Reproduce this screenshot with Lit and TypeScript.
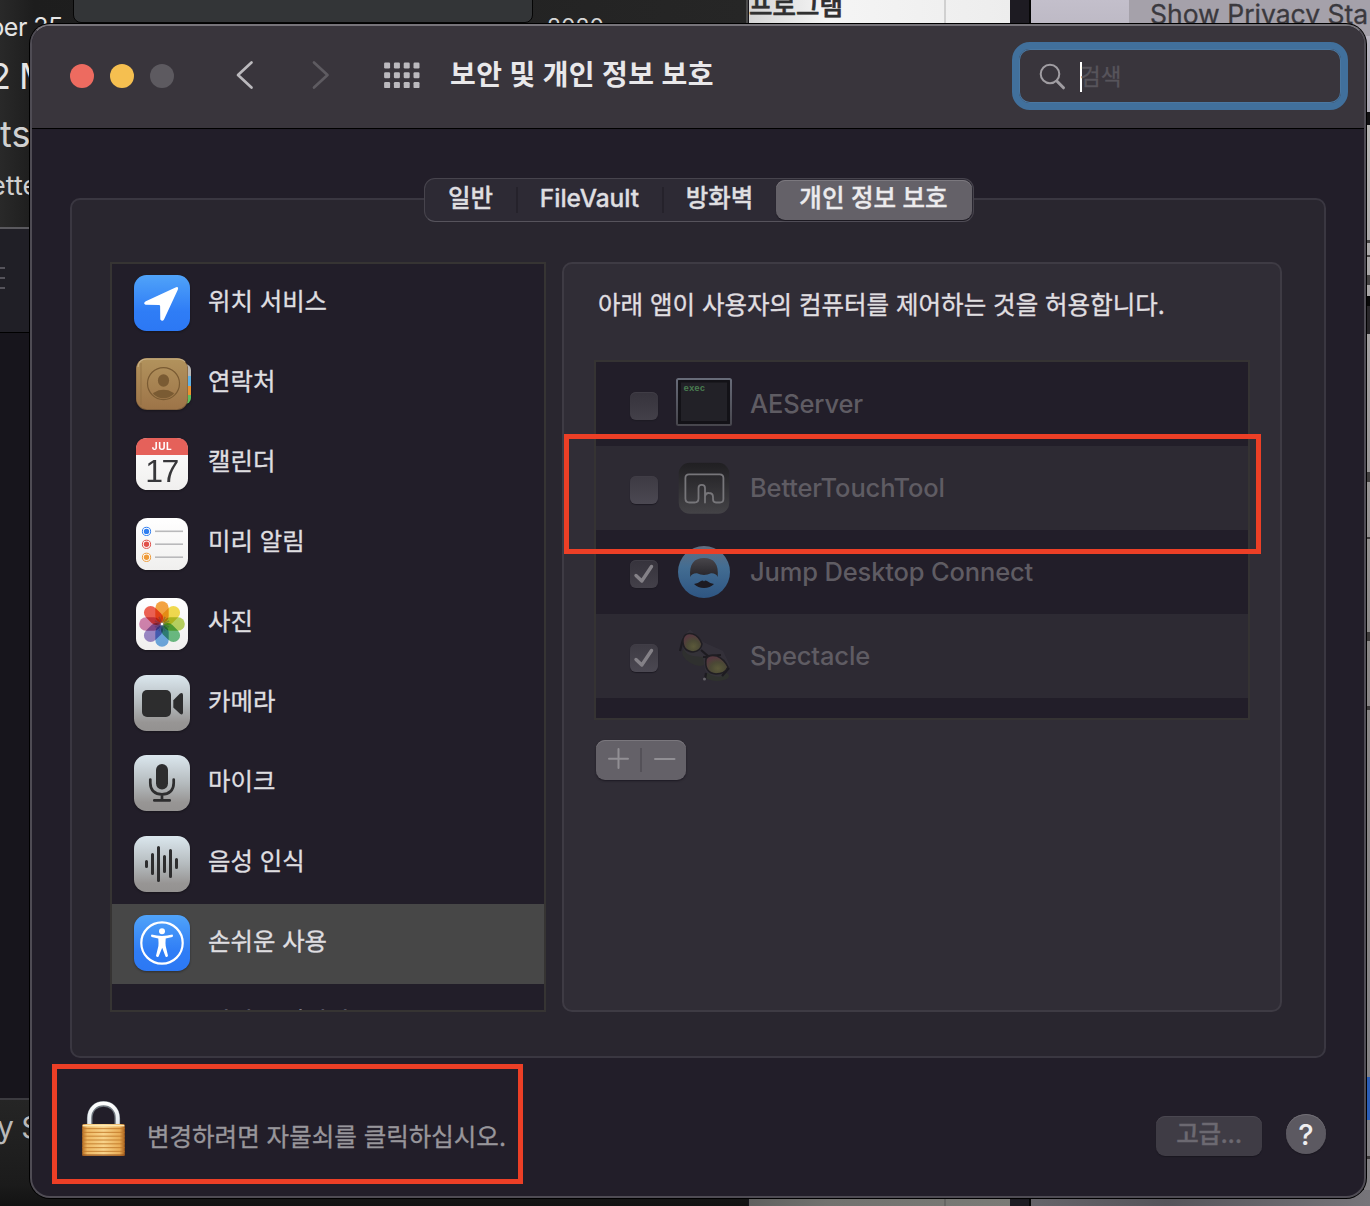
import { LitElement, html, svg, css, TemplateResult } from "lit";
import { customElement } from "lit/decorators.js";
import { classMap } from "lit/directives/class-map.js";

interface Category {
  label: string;
  icon: TemplateResult;
  selected?: boolean;
}

interface AppEntry {
  name: string;
  icon: TemplateResult;
  checked: boolean;
}

const blueTile = svg`
  <defs>
    <linearGradient id="blue" x1="0" y1="0" x2="0" y2="1">
      <stop offset="0" stop-color="#50a3f9"/><stop offset=".65" stop-color="#2f7df6"/><stop offset="1" stop-color="#2c78f4"/>
    </linearGradient>
  </defs>
  <rect width="56" height="56" rx="12.5" fill="url(#blue)"/>`;

const grayTile = svg`
  <defs>
    <linearGradient id="gray" x1="0" y1="0" x2="0" y2="1">
      <stop offset="0" stop-color="#dbe7ee"/><stop offset=".5" stop-color="#b5bbbe"/><stop offset=".85" stop-color="#979594"/><stop offset="1" stop-color="#949291"/>
    </linearGradient>
  </defs>
  <rect width="56" height="56" rx="12.5" fill="url(#gray)"/>`;

const whiteTile = svg`
  <defs>
    <linearGradient id="white" x1="0" y1="0" x2="0" y2="1">
      <stop offset="0" stop-color="#ffffff"/><stop offset="1" stop-color="#f0efee"/>
    </linearGradient>
  </defs>
  <rect x="2" y="3" width="52" height="52" rx="11.5" fill="url(#white)"/>`;

const locationIcon = html`<svg viewBox="0 0 56 56">${blueTile}
  <path d="M11.8 26.2 L41.5 12.4 Q45 11.2 43.8 14.8 L30 44.6 Q28.4 47 26.3 44.6 L26.1 31 Q26 30 25 29.9 L11.6 29.7 Q8.6 28.4 11.8 26.2Z" fill="#fff"/></svg>`;

const contactsIcon = html`<svg viewBox="0 0 56 56">
  <defs>
    <linearGradient id="tan" x1="0" y1="0" x2="0" y2="1">
      <stop offset="0" stop-color="#b2935d"/><stop offset="1" stop-color="#9d7448"/>
    </linearGradient>
    <clipPath id="disc"><circle cx="29.500" cy="28.600" r="14.600"/></clipPath>
    <clipPath id="tabs"><rect x="40" y="9" width="17" height="40" rx="6"/></clipPath>
  </defs>
  <g clip-path="url(#tabs)">
    <rect x="40" y="9" width="17" height="12" fill="#b9b7b4"/><rect x="40" y="21" width="17" height="10" fill="#61b2e4"/>
    <rect x="40" y="31" width="17" height="9" fill="#ea9230"/><rect x="40" y="40" width="17" height="9" fill="#5fbf5c"/>
  </g>
  <rect x="2" y="3" width="52" height="52" rx="11" fill="#7b5c3a"/>
  <rect x="2.400" y="3.200" width="51" height="51" rx="10.600" fill="url(#tan)"/>
  <path d="M4 12 Q4.500 4.200 13 4 H43 Q49 4 51 7" fill="none" stroke="#d3bf9a" stroke-width="1.200" opacity=".7"/>
  <path d="M7 8 V50" stroke="#8b6c40" stroke-width="1.200" opacity=".6"/>
  <g fill="#7a5b33">
    <ellipse cx="29.500" cy="25.500" rx="5.600" ry="6.200"/>
    <ellipse cx="29.500" cy="43" rx="12.500" ry="8.300" clip-path="url(#disc)"/>
  </g>
  <circle cx="29.500" cy="28.600" r="16" fill="none" stroke="#7a5b33" stroke-width="1.200"/></svg>`;

const calendarIcon = html`<svg viewBox="0 0 56 56">${whiteTile}
  <path d="M2 20 V14.500 Q2 3 13.500 3 H42.500 Q54 3 54 14.500 V20Z" fill="#e5615a"/>
  <text class="month" x="28" y="15.300" text-anchor="middle">JUL</text>
  <text class="day" x="27.500" y="47" text-anchor="middle">17</text></svg>`;

const reminderRows = [
  { y: 16.4, color: "#2f7ef0" },
  { y: 29.3, color: "#e0504a" },
  { y: 42.3, color: "#ee9a38" },
];
const remindersIcon = html`<svg viewBox="0 0 56 56">${whiteTile}
  ${reminderRows.map((r) => svg`
    <circle cx="12.500" cy=${r.y} r="4.100" fill="#fff" stroke=${r.color} stroke-width="1"/>
    <circle cx="12.500" cy=${r.y} r="2.700" fill=${r.color}/>
    <rect x="21" y=${r.y - 0.9} width="28" height="1.600" fill="#b9b9bb"/>`)}</svg>`;

const petals = ["#f49a2d", "#f2d93c", "#b3d150", "#5db978", "#5fa3e3", "#9480c6", "#cf78a8", "#ee5140"];
const photosIcon = html`<svg viewBox="0 0 56 56">${whiteTile}
  <g class="petals">
  ${petals.map((c, i) => svg`<rect x="21.300" y="6.200" width="13.400" height="21.500" rx="6.700" fill=${c} transform="rotate(${i * 45} 28 29)"/>`)}
  </g>
  <g fill="none" stroke="#3a3450" stroke-opacity=".38" stroke-width=".8">
    ${petals.map((_, i) => svg`<path d="M28 29 L24.600 22 M28 29 L31.400 22" transform="rotate(${i * 45} 28 29)"/>`)}
  </g>
  <circle cx="28" cy="29" r="1.200" fill="#fff"/></svg>`;

const cameraIcon = html`<svg viewBox="0 0 56 56">${grayTile}
  <rect x="8" y="15" width="29" height="27" rx="5" fill="#2d2d2e"/>
  <path d="M39.300 25.300 L46 18.500 Q48.800 16.800 49 19.800 V37.500 Q48.800 40.500 46 38.800 L39.300 32.500Z" fill="#2d2d2e"/></svg>`;

const micIcon = html`<svg viewBox="0 0 56 56">${grayTile}
  <rect x="22" y="9" width="12" height="25.500" rx="6" fill="#2d2d2e"/>
  <path d="M16.300 24.500 V28 C16.300 35.500 21 39.300 28 39.300 S39.700 35.500 39.700 28 V24.500 M28 39.500 V45 M20.300 45.400 H35.700" fill="none" stroke="#2d2d2e" stroke-width="2.700" stroke-linecap="round"/></svg>`;

const speechIcon = html`<svg class="low" viewBox="0 0 56 56">${grayTile}
  <path d="M12.500 25.500 V30.500 M18.500 18.500 V37.500 M24.500 11.500 V44.500 M30.500 20.500 V35.500 M36.500 14.500 V40.500 M42.500 23.500 V31.500" stroke="#2d2d2e" stroke-width="3" stroke-linecap="round"/></svg>`;

const accessIcon = html`<svg viewBox="0 0 56 56">${blueTile}
  <circle cx="28" cy="28" r="20.700" fill="none" stroke="#fff" stroke-width="2.200"/>
  <circle cx="28" cy="16.300" r="3" fill="#fff"/>
  <path d="M17.600 19.600 Q28 22.200 38.400 19.600 Q39.800 21 38.400 22 L31.700 23.400 Q31.300 28 31.700 31 L34 40.800 Q33 43 31.500 41.500 L28.200 32.800 L24.600 41.500 Q23 43 22 40.800 L24.400 31 Q24.700 28 24.300 23.400 L17.600 22 Q16.200 21 17.600 19.600Z" fill="#fff"/></svg>`;

const execIcon = html`<svg viewBox="0 0 56 56">
  <defs><linearGradient id="bezel" x1="0" y1="0" x2="0" y2="1"><stop offset="0" stop-color="#676b78"/><stop offset="1" stop-color="#47464d"/></linearGradient></defs>
  <rect x="1" y="5" width="54" height="46" rx="1.500" fill="#131217" stroke="url(#bezel)" stroke-width="2"/>
  <rect x="5" y="8.500" width="46" height="38.500" fill="#222127"/>
  <text class="exec" x="7.500" y="17">exec</text></svg>`;

const touchIcon = html`<svg viewBox="0 0 56 56">
  <defs><linearGradient id="btt" x1="0" y1="0" x2="0" y2="1"><stop offset="0" stop-color="#201f22"/><stop offset="1" stop-color="#444347"/></linearGradient></defs>
  <rect x="2.700" y="4.800" width="50.600" height="51" rx="11" fill="url(#btt)"/>
  <path d="M22.500 38.500 V30 Q22.500 26.800 25.800 26.800 Q29 26.800 29 30 V44.500 M29 38.500 Q29.500 34.800 32.800 35 Q37 35 37 39 V41 Q37 44.500 40 44.500 H44 Q47.400 44.500 47.400 41 V20 Q47.400 16.300 43.700 16.300 H13 Q9.400 16.300 9.400 20 V40.500 Q9.400 44.500 13.300 44.500 H18.500 Q22.500 44.500 22.500 40.500 V36" fill="none" stroke="#77767a" stroke-width="1.800" stroke-linecap="round"/></svg>`;

const jumpIcon = html`<svg viewBox="0 0 56 56">
  <defs><linearGradient id="jump" x1="0" y1="0" x2="0" y2="1"><stop offset="0" stop-color="#626e80"/><stop offset=".4" stop-color="#436d92"/><stop offset="1" stop-color="#2e5582"/></linearGradient>
  <linearGradient id="hair" x1="0" y1="0" x2="0" y2="1"><stop offset="0" stop-color="#48464b"/><stop offset="1" stop-color="#262429"/></linearGradient></defs>
  <circle cx="28" cy="30" r="26" fill="url(#jump)"/>
  <path d="M14.300 35 C13 22 18 16 28 16 S43 22 41.700 35 Q40 31 35 31.300 Q28 34.500 21 31.300 Q16 31 14.300 35Z" fill="url(#hair)"/>
  <path d="M18 42 Q22 41.500 25 39 Q27 38 28 39.500 Q29 38 31 39 Q34 41.500 38 42 Q34 46 28 46 Q22 46 18 42Z" fill="#1d1b22"/></svg>`;

const spectacleIcon = html`<svg viewBox="0 0 56 56">
  <defs><radialGradient id="lens" cx=".55" cy=".7" r=".6"><stop offset="0" stop-color="#5c5a3a"/><stop offset=".55" stop-color="#4b4935"/><stop offset="1" stop-color="#55393f"/></radialGradient></defs>
  <ellipse cx="18" cy="31" rx="13" ry="7" fill="#343b27" opacity=".35" transform="rotate(30 18 31)"/>
  <ellipse cx="41" cy="50" rx="12" ry="5" fill="#343b27" opacity=".45"/>
  <path d="M5 13 L14 3.500 L27 16 L47 25 L54 40 L48 50 Q36 53 29 44 L27 31 L17 30 Q6 28 5 13Z" fill="#37343d" opacity=".65"/>
  <path d="M4 25 L7 13 M25 24 L32 30 L45 29 M27 31 L31 31 M53 42 L46 50 M30 47 L29 54" stroke="#1d1b20" stroke-width="2.200" fill="none"/>
  <path d="M7 13 Q9 6 17 8 Q23 10 26 18 Q25 25 17 26 Q6 25 7 13Z" fill="url(#lens)" stroke="#201e23" stroke-width="1.600"/>
  <path d="M30 33 Q33 28 41 30 Q48 33 52 41 Q49 48 40 48 Q28 47 30 33Z" fill="url(#lens)" stroke="#201e23" stroke-width="1.600"/>
  <circle cx="28.500" cy="53" r="1.500" fill="#66646a"/></svg>`;

const lockIcon = html`<svg class="lock" viewBox="0 0 44 56">
  <defs>
    <linearGradient id="brass" x1="0" y1="0" x2="1" y2="0"><stop offset="0" stop-color="#b76e22"/><stop offset=".12" stop-color="#eeb964"/><stop offset=".5" stop-color="#f8d38a"/><stop offset=".88" stop-color="#e9ad56"/><stop offset="1" stop-color="#a85f1a"/></linearGradient>
    <linearGradient id="steel" x1="0" y1="0" x2="0" y2="1"><stop offset="0" stop-color="#ffffff"/><stop offset="1" stop-color="#dde4ea"/></linearGradient>
  </defs>
  <path d="M7.700 25 V17.500 C7.700 -2 35.300 -2 35.300 17.500 V25" fill="none" stroke="#717980" stroke-width="5.600"/>
  <path d="M7.300 25 V17 C7.300 -2.500 35.700 -2.500 35.700 17 V25" fill="none" stroke="url(#steel)" stroke-width="3.800"/>
  <rect x=".2" y="23" width="42.600" height="32" rx="1.500" fill="url(#brass)"/>
  <rect x=".7" y="23.800" width="41.600" height="1.600" fill="#fde9b4"/>
  ${[27, 30.8, 34.6, 38.4, 42.2, 46, 49.8].map((y) => svg`<rect x=".5" y=${y} width="42" height="1.200" fill="#c27a2b" opacity=".75"/>`)}
  <rect x=".5" y="53.500" width="42" height="1.200" fill="#96501a"/></svg>`;

const categories: Category[] = [
  { label: "위치 서비스", icon: locationIcon },
  { label: "연락처", icon: contactsIcon },
  { label: "캘린더", icon: calendarIcon },
  { label: "미리 알림", icon: remindersIcon },
  { label: "사진", icon: photosIcon },
  { label: "카메라", icon: cameraIcon },
  { label: "마이크", icon: micIcon },
  { label: "음성 인식", icon: speechIcon },
  { label: "손쉬운 사용", icon: accessIcon, selected: true },
  { label: "입력 모니터링", icon: html`` },
];

const apps: AppEntry[] = [
  { name: "AEServer", icon: execIcon, checked: false },
  { name: "BetterTouchTool", icon: touchIcon, checked: false },
  { name: "Jump Desktop Connect", icon: jumpIcon, checked: true },
  { name: "Spectacle", icon: spectacleIcon, checked: true },
];

/** The other windows whose edges show around the preferences window. */
@customElement("desktop-backdrop")
export class DesktopBackdrop extends LitElement {
  static styles = css`
    :host { position: absolute; inset: 0; overflow: hidden; background: #17151c; font-family: Inter, "Noto Sans CJK KR", sans-serif; }
    div { position: absolute; white-space: nowrap; box-sizing: border-box; }
    .notes { left: 0; top: 0; width: 748px; height: 229px; background: linear-gradient(90deg, #292929 0, #1d1d1d 34px, #262626 100%); border-right: 2px solid #4b4b4b; }
    .panel { left: 73px; top: -20px; width: 460px; height: 43px; background: #333537; border: 1px solid #050505; border-radius: 0 0 8px 8px; }
    .toolbar { left: 0; top: 227px; width: 40px; height: 106px; background: #201f26; border-top: 2px solid #5a595e; border-bottom: 1px solid #000; }
    .lines { left: 0; top: 267px; width: 5px; height: 23px; background: repeating-linear-gradient(#55535b 0 2px, transparent 2px 10px); }
    .lower { left: 0; top: 1098px; width: 748px; height: 108px; background: linear-gradient(#252525, #1b1b1b 80%, #121212); border-top: 2px solid #3c3b40; }
    .t { color: #e5e5e5; }
    .a { left: -11px; top: 12px; font-size: 25px; line-height: 31px; letter-spacing: -.5px; }
    .b { left: -11px; top: 54px; font-size: 36px; line-height: 44px; letter-spacing: -1px; }
    .c { left: 0; top: 112px; font-size: 36px; line-height: 44px; color: #d0d0d0; }
    .d { left: -10px; top: 169px; font-size: 27px; line-height: 34px; color: #cfcfcf; }
    .e { left: -9px; top: 221px; height: 7px; overflow: hidden; font-size: 27px; line-height: 23px; color: #b5b5b5; }
    .f { left: -3px; top: 1108px; font-size: 30px; line-height: 38px; letter-spacing: -.5px; color: #b9b9b9; }
    .g { left: 547px; top: 12px; font-size: 23px; line-height: 30px; color: #d6d6d6; }
    .sheet { left: 749px; top: 0; width: 261px; height: 600px; background: linear-gradient(90deg, #d5d5d5, #f5f5f5 30%, #ededed); }
    .sheet2 { left: 749px; top: 1100px; width: 261px; height: 106px; background: linear-gradient(90deg, #60605f, #72726f 30%, #7a7a76); }
    .rule { left: 944px; top: 0; width: 2px; height: 100px; background: #d0d0d0; }
    .rule2 { left: 944px; top: 1190px; width: 2px; height: 16px; background: #666664; }
    .prog { left: 749px; top: -10px; font-size: 25.500px; line-height: 32px; font-weight: 500; color: #303030; -webkit-text-stroke: .6px #303030; }
    .gap { left: 1010px; top: 0; width: 21px; height: 1206px; background: #1d1b22; border-right: 2px solid #060606; }
    .mauve { left: 1031px; top: 0; width: 339px; height: 113px; background: linear-gradient(#c3bfcb, #aaa6b0); }
    .tab { left: 1129px; top: -10px; width: 260px; height: 46px; background: #a5a1aa; border-radius: 8px; }
    .show { left: 1150px; top: -3px; font-size: 26.500px; line-height: 34px; color: #3b393e; -webkit-text-stroke: .3px #3b393e; }
    .edge { left: 1364px; top: 113px; width: 6px; height: 1093px; background: linear-gradient(#b9b7b5 0, #a4a1a2 20%, #8a8786 50%, #838184); }
    .dark1 { left: 1364px; top: 112px; width: 6px; height: 13px; background: #131214; }
    .dark2 { left: 1364px; top: 296px; width: 6px; height: 38px; background: #29272a; border-top: 10px solid #090909; }
    .blue { left: 1364px; top: 1077px; width: 6px; height: 43px; background: #2b5eb8; }
    .base { left: 1031px; top: 1190px; width: 339px; height: 16px; background: linear-gradient(90deg, #66646a, #56545a 40%, #77757a); }
    .m { left: 1367px; width: 3px; height: 10px; overflow: hidden; background: #252323; opacity: .75; }
    .m1 { top: 240px; height: 3px; } .m2 { top: 255px; height: 2px; } .m3 { top: 275px; } .m4 { top: 472px; }
    .m5 { top: 537px; height: 2px; } .m6 { top: 632px; height: 9px; } .m7 { top: 706px; height: 4px; } .m8 { top: 1156px; height: 3px; }
  `;
  render() {
    return html`
      <div class="notes"></div>
      <div class="t a">ber 25</div><div class="t b">2 M</div><div class="t c">ts</div><div class="t d">ette</div><div class="t e">por</div>
      <div class="t g">2020</div>
      <div class="panel"></div>
      <div class="toolbar"></div><div class="lines"></div>
      <div class="lower"></div><div class="t f">y S</div>
      <div class="sheet"></div><div class="sheet2"></div><div class="rule"></div><div class="rule2"></div><div class="prog">프로그램</div>
      <div class="gap"></div>
      <div class="mauve"></div><div class="tab"></div><div class="show">Show Privacy Sta</div>
      <div class="edge"></div><div class="dark1"></div><div class="dark2"></div><div class="blue"></div><div class="base"></div>
      ${[1, 2, 3, 4, 5, 6, 7, 8].map((n) => html`<div class="m m${n}"></div>`)}
    `;
  }
}

@customElement("app-root")
export class AppRoot extends LitElement {
  static styles = css`
    :host { display: block; position: relative; width: 1370px; height: 1206px; overflow: hidden; font-family: Inter, "Noto Sans CJK KR", sans-serif; color: #dfdee0; }
    * { box-sizing: border-box; }
    svg { display: block; flex: none; overflow: visible; }
    .window { position: absolute; left: 30px; top: 24px; width: 1336px; height: 1174px; display: flex; flex-direction: column; border: 2px solid #4f4c54; border-top-color: #77747a; border-radius: 20px; background: #221e29; box-shadow: 0 0 0 1px #000; }
    .titlebar { height: 103px; flex: none; display: flex; background: #39353c; border-bottom: 1px solid #000; border-radius: 18px 18px 0 0; }
    .lights { display: flex; gap: 16px; padding: 38px 0 0 38px; }
    .light { width: 24px; height: 24px; border-radius: 50%; background: #5d5a60; }
    .close { background: #ed6b60; }
    .min { background: #f5bf50; }
    .nav { display: flex; margin: 35px 0 0 62px; gap: 58px; }
    .apps { margin: 36px 0 0 54px; }
    .title { margin: 28px 0 0 29px; font-size: 28px; line-height: 42px; font-weight: 700; white-space: nowrap; color: #e9e8ea; letter-spacing: .42px; }
    .search { margin: 16px 16px 0 auto; width: 336px; height: 68px; border: 7px solid #41709c; border-radius: 18px; display: flex; box-shadow: inset 0 0 0 1px #4a78a2; }
    .glass { margin: 14px 0 0 20px; }
    .caret { width: 2px; height: 30px; margin: 13px 0 0 14px; background: #fff; }
    .hint { margin: 13px 0 0 -2px; font-size: 22.500px; line-height: 30px; color: #57545b; -webkit-text-stroke: .3px; }
    .body { flex: 1; padding: 49px 38px 0; display: flex; flex-direction: column; }
    .tabs { align-self: center; position: relative; height: 44px; width: 550px; margin-left: 1px; flex: none; display: flex; padding: 1px; border: 1px solid #47444d; border-bottom-color: #56535c; border-radius: 11px; background: #2d2a34; font-size: 24.500px; line-height: 37px; font-weight: 500; text-align: center; -webkit-text-stroke: .35px; }
    .tab { flex: none; border-right: 2px solid transparent; border-image: linear-gradient(transparent 8px, #25222b 8px 32px, transparent 32px) 1; }
    .tab1 { width: 92px; } .tab2 { width: 146px; } .tab3 { width: 112px; border: 0; }
    .tab.on { width: 196px; height: 40px; border: 0; border-radius: 9px; background: #646168; box-shadow: inset 0 1px 0 #7b787e, 0 1px 1px #1b1820; color: #ecebed; }
    .group { margin-top: -24px; height: 860px; flex: none; border: 2px solid #3a3741; border-radius: 10px; background: #29262f; padding: 62px 42px 0 38px; display: flex; gap: 16px; }
    .list { width: 436px; height: 750px; border: 2px solid #363433; background: #221e29; overflow: hidden; }
    .row { height: 80px; display: flex; padding: 11px 0 0 22px; gap: 18px; font-size: 24.400px; line-height: 53px; -webkit-text-stroke: .35px; }
    .row.sel { background: #474747; }
    .icon { width: 56px; height: 56px; flex: none; filter: drop-shadow(0 1px 1px rgba(0, 0, 0, .35)); -webkit-text-stroke: 0; }
    .row.sel .icon, .icon svg { width: 56px; height: 56px; }
    .icon .low { margin-top: 1px; }
    .month { font: 700 10px Inter, sans-serif; letter-spacing: .5px; fill: #fff; }
    .day { font: 300 32px "Liberation Sans", Inter, sans-serif; letter-spacing: -1.500px; fill: #37373a; }
    .exec { font: 700 9px "Liberation Mono", monospace; fill: #497c50; }
    .petals rect { mix-blend-mode: multiply; opacity: .9; }
    .panel { width: 720px; height: 750px; border: 2px solid #3e3b44; border-radius: 10px; background: #302d36; padding: 0 30px; }
    .lead { margin: 21px 0 0 4px; height: 40px; line-height: 40px; font-size: 24.500px; white-space: nowrap; color: #e0dfe1; -webkit-text-stroke: .35px; }
    .table { margin-top: 35px; height: 360px; width: 656px; border: 2px solid #353333; background: #221e29; }
    .app { height: 84px; display: flex; padding: 14px 0 0 34px; font-size: 25.500px; line-height: 56px; color: #5f5c63; font-weight: 500; letter-spacing: -.15px; }
    .app:nth-child(even) { background: #2d2a33; }
    .app .icon { margin: -2px 18px 0; filter: none; letter-spacing: 0; }
    .box { margin-top: 16px; width: 28px; height: 28px; border-radius: 6px; background: linear-gradient(#36333c, #434049); box-shadow: 0 1px 1px #1d1a23, inset 0 1px 0 #403d46; }
    .app:nth-child(even) .box { background: linear-gradient(#3d3a43, #4b4852); }
    .plusminus { margin: 20px 0 0 2px; width: 90px; height: 40px; border-radius: 9px; background: #646168; box-shadow: inset 0 1px 0 #7a777d, 0 1px 2px #1c1922; }
    .footer { display: flex; padding: 0 0 0 12px; }
    .lock { width: 44px; height: 56px; margin-top: 43px; }
    .unlock { margin: 59px 0 0 21px; font-size: 24.500px; line-height: 40px; color: #98969b; white-space: nowrap; -webkit-text-stroke: .35px; }
    .adv { margin: 58px 0 0 auto; width: 106px; height: 40px; border-radius: 9px; background: #3f3c45; box-shadow: inset 0 1px 0 #4a4750, 0 1px 1px #1a1720; text-align: center; font-size: 24.500px; line-height: 37px; color: #6c6971; font-weight: 500; letter-spacing: -.4px; -webkit-text-stroke: .35px; }
    .help { margin: 56px 0 0 24px; width: 40px; height: 40px; border-radius: 50%; background: #5c5961; box-shadow: inset 0 1px 0 #716e75, 0 1px 1px #1a1720; text-align: center; font-size: 29px; line-height: 41px; font-weight: 500; color: #efeef0; }
    .mark { position: absolute; border: 5px solid #ec3f26; }
    .mark1 { left: 564px; top: 434px; width: 697px; height: 120px; }
    .mark2 { left: 52px; top: 1064px; width: 471px; height: 120px; }
  `;

  private renderTitlebar() {
    const dots = [0, 1, 2].flatMap((r) => [0, 1, 2, 3].map((c) => svg`<rect x=${c * 9.8 + 0.1} y=${r * 9.8 + 0.5} width="6" height="6" rx="1.200"/>`));
    return html`<header class="titlebar">
      <div class="lights"><i class="light close"></i><i class="light min"></i><i class="light"></i></div>
      <div class="nav">
        <svg width="18" height="28" viewBox="0 0 18 28"><path d="M15.500 1.500 L2 14 L15.500 26.500" fill="none" stroke="#bbb9bd" stroke-width="2.700" stroke-linecap="round" stroke-linejoin="round"/></svg>
        <svg width="18" height="28" viewBox="0 0 18 28"><path d="M2 1.500 L15.500 14 L2 26.500" fill="none" stroke="#5e5b61" stroke-width="2.700" stroke-linecap="round" stroke-linejoin="round"/></svg>
      </div>
      <svg class="apps" width="37" height="27" viewBox="0 0 37 27" fill="#bbb9be">${dots}</svg>
      <div class="title">보안 및 개인 정보 보호</div>
      <div class="search">
        <svg class="glass" width="27" height="28" viewBox="0 0 27 28" fill="none" stroke="#a09da2" stroke-width="2"><circle cx="11" cy="11" r="9.300"/><path d="M17.800 18 L24.500 24.800" stroke-width="3" stroke-linecap="round"/></svg>
        <i class="caret"></i><span class="hint">검색</span>
      </div>
    </header>`;
  }

  private renderApp(a: AppEntry) {
    return html`<div class="app">
      <span class="box">${a.checked
        ? html`<svg width="28" height="28" viewBox="0 0 28 28"><path d="M6 15.500 L11.800 21 L21.500 6.500" fill="none" stroke="#848187" stroke-width="3.400" stroke-linecap="round" stroke-linejoin="round"/></svg>`
        : null}</span>
      <span class="icon">${a.icon}</span><span>${a.name}</span>
    </div>`;
  }

  render() {
    return html`
      <desktop-backdrop></desktop-backdrop>
      <section class="window">
        ${this.renderTitlebar()}
        <main class="body">
          <nav class="tabs">
            <span class="tab tab1">일반</span><span class="tab tab2">FileVault</span><span class="tab tab3">방화벽</span><span class="tab on">개인 정보 보호</span>
          </nav>
          <div class="group">
            <div class="list">
              ${categories.map((c) => html`<div class=${classMap({ row: true, sel: !!c.selected })}><span class="icon">${c.icon}</span><span>${c.label}</span></div>`)}
            </div>
            <div class="panel">
              <div class="lead">아래 앱이 사용자의 컴퓨터를 제어하는 것을 허용합니다.</div>
              <div class="table">${apps.map((a) => this.renderApp(a))}</div>
              <div class="plusminus">
                <svg width="90" height="40" viewBox="0 0 90 40"><path d="M13 18.700 H32 M22.500 9 V28 M59 19 H78.500" stroke="#918f94" stroke-width="2" stroke-linecap="round"/><path d="M45 8 V32" stroke="#545158" stroke-width="2"/></svg>
              </div>
            </div>
          </div>
          <footer class="footer">
            ${lockIcon}
            <span class="unlock">변경하려면 자물쇠를 클릭하십시오.</span>
            <span class="adv">고급...</span>
            <span class="help">?</span>
          </footer>
        </main>
      </section>
      <div class="mark mark1"></div>
      <div class="mark mark2"></div>
    `;
  }
}
